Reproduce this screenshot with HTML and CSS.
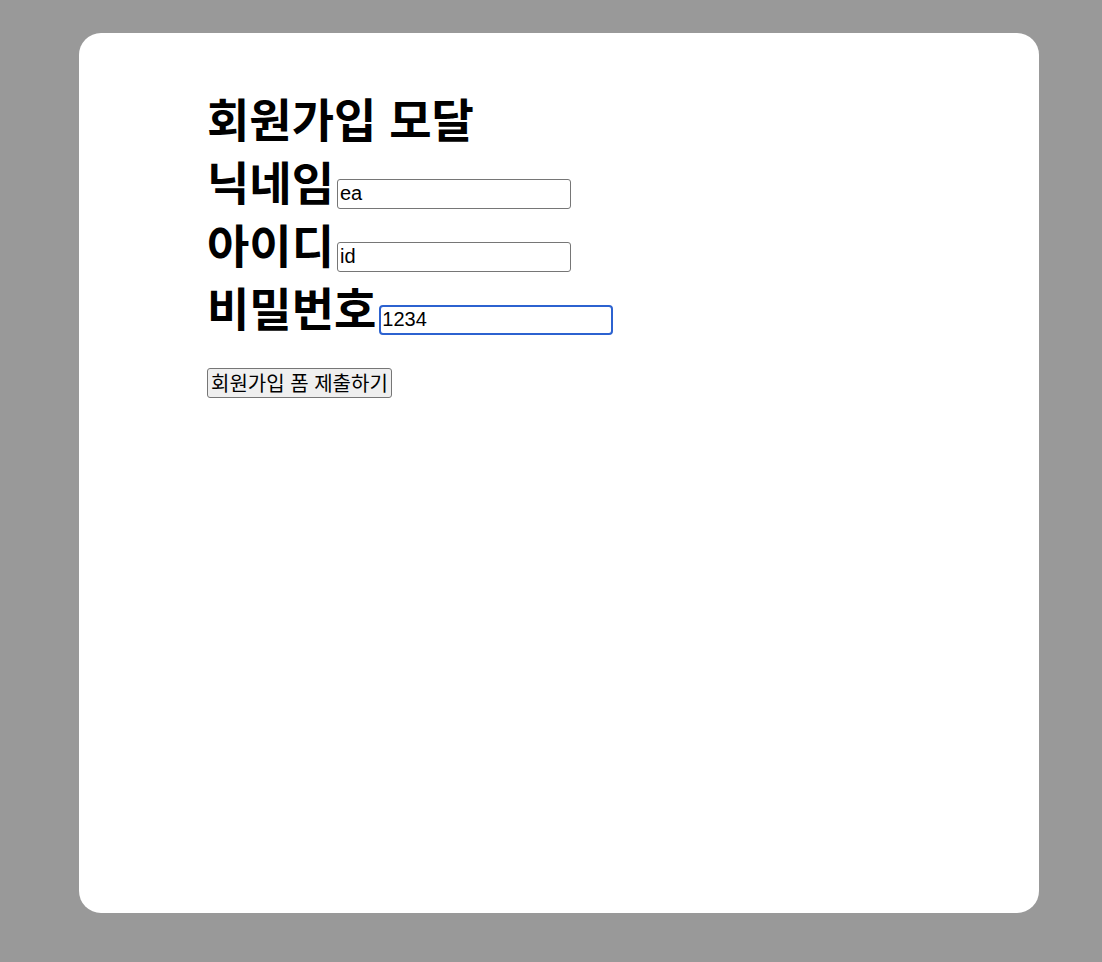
FILE: index.html
```html
<!DOCTYPE html>
<html lang="ko">
<head>
<meta charset="utf-8">
<title>회원가입 모달</title>
<link rel="stylesheet" href="styles.css">
</head>
<body>
<div class="overlay">
  <div class="modal">
    <h1 class="title">회원가입 모달</h1>
    <form class="form">
      <div class="row"><label class="label">닉네임</label><input class="field" type="text" value="ea"></div>
      <div class="row"><label class="label">아이디</label><input class="field" type="text" value="id"></div>
      <div class="row"><label class="label">비밀번호</label><input class="field is-focused" type="text" value="1234"></div>
      <button class="submit" type="button">회원가입 폼 제출하기</button>
    </form>
  </div>
</div>
</body>
</html>
```

FILE: styles.css
```css
html, body {
  margin: 0;
  padding: 0;
}
body {
  background: #999999;
  width: 1102px;
  height: 962px;
  overflow: hidden;
  font-family: "Noto Sans CJK KR", "Liberation Sans", sans-serif;
}
.overlay {
  padding: 33px 0 0 79px;
}
.modal {
  box-sizing: border-box;
  width: 960px;
  height: 880px;
  background: #ffffff;
  border-radius: 22px;
  padding: 53px 0 0 128px;
}
.title {
  margin: 0;
  font-size: 46px;
  line-height: 63px;
  font-weight: 700;
  color: #000;
}
.form {
  margin: 0;
}
.row {
  font-size: 46px;
  line-height: 63px;
  font-weight: 700;
  white-space: nowrap;
}
.label {
  margin-right: 3px;
}
.field {
  box-sizing: border-box;
  width: 234px;
  height: 30px;
  font-family: "Liberation Sans", "Noto Sans CJK KR", sans-serif;
  font-size: 20px;
  font-weight: 400;
  padding: 1px 2px;
  border: 1px solid #767676;
  border-radius: 3px;
  color: #000;
  background: #fff;
  vertical-align: baseline;
}
.field.is-focused {
  border: 2px solid #2c62d0;
  border-radius: 4px;
  padding: 0 1px;
  outline: none;
}
.submit {
  display: block;
  margin-top: 30px;
  box-sizing: border-box;
  height: 30px;
  padding: 0 3px;
  font-family: "Noto Sans CJK KR", "Liberation Sans", sans-serif;
  font-size: 20px;
  line-height: 26px;
  color: #000;
  background: #efefef;
  border: 1px solid #767676;
  border-radius: 3px;
}
```
